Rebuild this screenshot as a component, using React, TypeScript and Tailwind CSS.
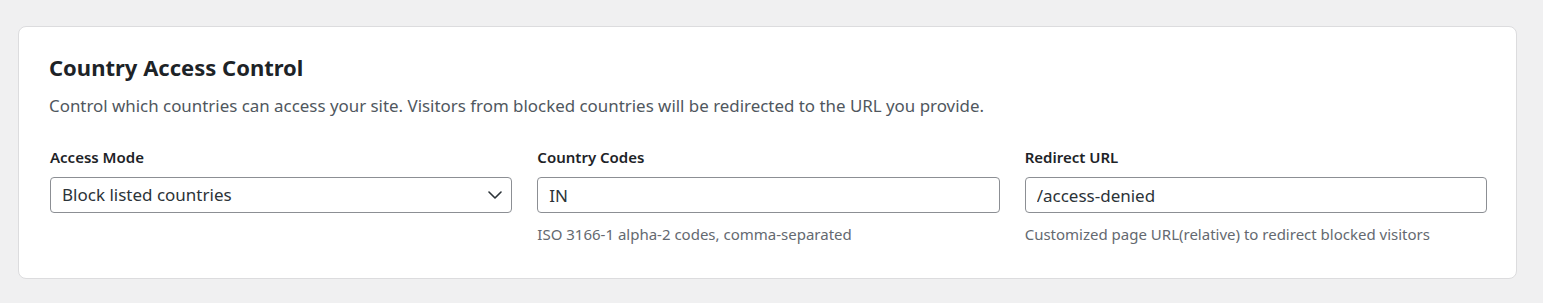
import React from 'react'

const font = { fontFamily: '"Noto Sans", "Open Sans", sans-serif' }

function Field({ label, children, help }: { label: string; children: React.ReactNode; help?: string }) {
  return (
    <div className="flex flex-col">
      <label className="text-[15px] font-semibold leading-[22px] text-[#1d2327] mb-[9px]">{label}</label>
      {children}
      {help && <p className="mt-[10px] text-[15px] leading-[22px] text-[#646970]">{help}</p>}
    </div>
  )
}

export default function App() {
  return (
    <div className="min-h-screen bg-[#f0f0f1] pt-[26px] pl-[18px] pr-[26px]" style={font}>
      <div className="bg-white border border-[#dcdcde] rounded-[8px] pl-[31px] pr-[29px] pt-[26px] pb-[33px]">
        <h2 className="text-[22px] font-bold leading-[28px] text-[#1d2327] -ml-[1px]">Country Access Control</h2>
        <p className="mt-[13px] text-[16.9px] leading-[24px] text-[#50575e] -ml-[1px]">
          Control which countries can access your site. Visitors from blocked countries will be redirected to the URL you provide.
        </p>
        <div className="mt-[28px] grid grid-cols-3 gap-[25px]">
          <Field label="Access Mode">
            <div className="relative">
              <select
                defaultValue="block"
                className="w-full h-[36px] appearance-none rounded-[4px] border border-[#8c8f94] bg-white pl-[11px] pr-[32px] text-[17px] text-[#2c3338] outline-none"
                style={font}
              >
                <option value="block">Block listed countries</option>
                <option value="allow">Allow listed countries</option>
              </select>
              <svg className="pointer-events-none absolute right-[10px] top-1/2 -translate-y-1/2" width="14" height="8" viewBox="0 0 14 8" fill="none" stroke="#2c3338" strokeWidth="1.6" strokeLinecap="round" strokeLinejoin="round">
                <path d="M1 1l6 6 6-6" />
              </svg>
            </div>
          </Field>
          <Field label="Country Codes" help="ISO 3166-1 alpha-2 codes, comma-separated">
            <input
              defaultValue="IN"
              className="w-full h-[36px] rounded-[4px] border border-[#8c8f94] bg-white px-[11px] text-[17px] text-[#2c3338] outline-none"
              style={font}
            />
          </Field>
          <Field label="Redirect URL" help="Customized page URL(relative) to redirect blocked visitors">
            <input
              defaultValue="/access-denied"
              className="w-full h-[36px] rounded-[4px] border border-[#8c8f94] bg-white px-[11px] text-[17px] text-[#2c3338] outline-none"
              style={font}
            />
          </Field>
        </div>
      </div>
    </div>
  )
}
